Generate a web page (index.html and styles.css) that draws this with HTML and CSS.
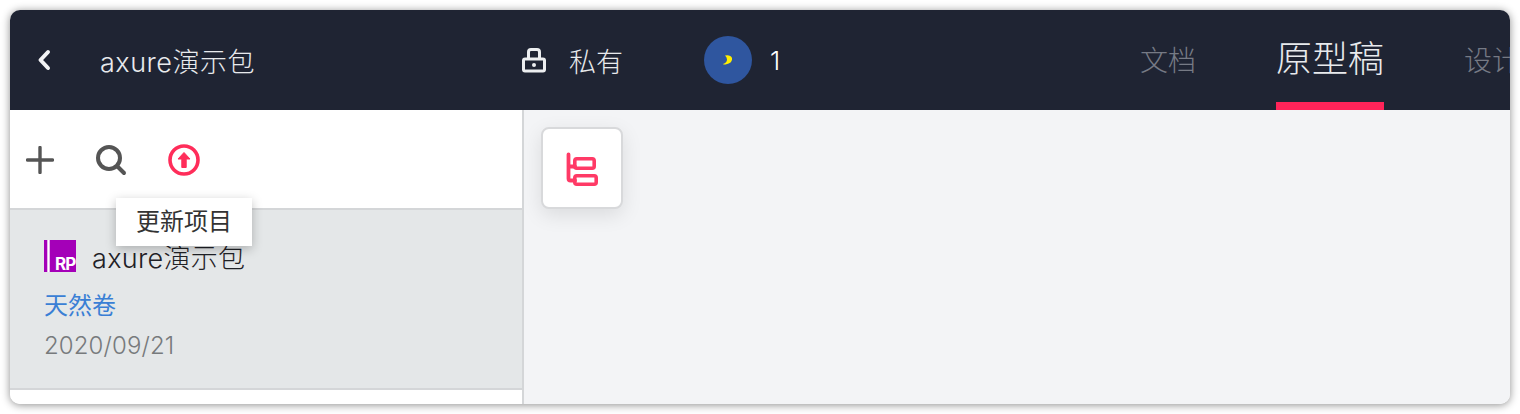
FILE: index.html
```html
<!DOCTYPE html>
<html lang="en">
<head>
<meta charset="UTF-8">
<meta name="viewport" content="width=device-width, initial-scale=1.0">
<title>axure演示包</title>
<link rel="stylesheet" href="styles.css">
</head>
<body>
<div class="window">
    <header class="topbar">
        <a class="back">
            <svg width="16" height="22" viewBox="0 0 16 22"><path d="M12 3 L4.500 11 L12 19" fill="none" stroke="#f2f3f5" stroke-width="4" stroke-linecap="round" stroke-linejoin="round"/></svg>
        </a>
        <div class="project-name">axure演示包</div>
        <div class="privacy">
            <svg width="26" height="26" viewBox="0 0 26 26"><path d="M7.500 11 V5 Q7.500 2.500 10 2.500 H16 Q18.500 2.500 18.500 5 V11" fill="none" stroke="#eceef0" stroke-width="3"/><rect x="2.500" y="12" width="21" height="12" rx="1.500" fill="none" stroke="#eceef0" stroke-width="3"/><circle cx="13" cy="18" r="2" fill="#eceef0"/></svg>
            <span>私有</span>
        </div>
        <div class="members">
            <div class="avatar">
                <svg width="12" height="12" viewBox="0 0 12 12"><path d="M3 1.500 Q8.500 .5 10 4 Q11 9 3.500 10.500 Q1.500 10.800 1 10 Q5 8.500 5 5.500 Q4.800 3 3 1.500 Z" fill="#ffef00"/></svg>
            </div>
            <span>1</span>
        </div>
        <nav class="tabs">
            <a class="tab">文档</a>
            <a class="tab active">原型稿</a>
            <a class="tab">设计稿</a>
        </nav>
    </header>
    <div class="content">
        <aside class="sidebar">
            <div class="toolbar">
                <svg class="tool-plus" width="28" height="28" viewBox="0 0 28 28"><path d="M14 1.500 V26.500 M1.500 14 H26.500" fill="none" stroke="#555" stroke-width="3.400" stroke-linecap="round"/></svg>
                <svg class="tool-search" width="32" height="32" viewBox="0 0 32 32"><circle cx="14" cy="14" r="11" fill="none" stroke="#555" stroke-width="4"/><path d="M22.500 22.500 L29 29" fill="none" stroke="#555" stroke-width="4" stroke-linecap="round"/></svg>
                <svg class="tool-update" width="32" height="32" viewBox="0 0 32 32"><circle cx="16" cy="16" r="14" fill="none" stroke="#ff2d5a" stroke-width="3.600"/><path d="M16 8.500 L22 15 H18.200 V23.500 H13.800 V15 H10 Z" fill="#ff2d5a" stroke="#ff2d5a" stroke-width="1" stroke-linejoin="round"/></svg>
                <div class="tooltip">更新项目</div>
            </div>
            <div class="project-item">
                <div class="item-title">
                    <svg width="32" height="32" viewBox="0 0 32 32"><rect width="32" height="32" fill="#a400b8"/><rect x="3.300" width="2.400" height="32" fill="#fff"/></svg>
                    <span>axure演示包</span>
                    <b class="rp">RP</b>
                </div>
                <div class="item-owner">天然卷</div>
                <div class="item-date">2020/09/21</div>
            </div>
        </aside>
        <main class="canvas">
            <button class="tree-btn">
                <svg width="36" height="36" viewBox="0 0 36 36"><path d="M4.500 4.500 V28.500 Q4.500 30.500 6.500 30.500 H11 M4.500 15 Q4.500 16.500 6.500 16.500 H11" fill="none" stroke="#ff3a66" stroke-width="3.800" stroke-linecap="round"/><rect x="10.800" y="8.800" width="19.400" height="9.400" rx="2" fill="none" stroke="#ff3a66" stroke-width="3.600"/><rect x="10.800" y="25.800" width="21.400" height="8.400" rx="2" fill="none" stroke="#ff3a66" stroke-width="3.600"/></svg>
            </button>
        </main>
    </div>
</div>
</body>
</html>
```

FILE: styles.css
```css
html,
body {
    margin: 0;
    height: 100%;
    background-color: #fff;
    overflow: hidden;
}

body {
    font-family: Inter, "Noto Sans CJK SC", sans-serif;
    padding: 10px;
    box-sizing: border-box;
}

.window {
    width: 1500px;
    height: 394px;
    border-radius: 10px;
    overflow: hidden;
    display: flex;
    flex-direction: column;
    background-color: #fff;
    box-shadow: 0 1px 8px rgba(0, 0, 0, 0.45);
}

.topbar {
    height: 100px;
    flex: none;
    display: flex;
    align-items: center;
    background-color: #1f2433;
    color: #e8eaed;
    font-size: 27px;
    font-weight: 300;
    overflow: hidden;
}

.back {
    display: flex;
    flex: none;
    margin-left: 26px;
    width: 16px;
}

.project-name {
    flex: none;
    margin-left: 48px;
    width: 421px;
    white-space: nowrap;
    letter-spacing: 0.5px;
}

.privacy {
    flex: none;
    display: flex;
    align-items: center;
    gap: 22px;
    width: 183px;
}

.members {
    flex: none;
    display: flex;
    align-items: center;
    gap: 18px;
    width: 82px;
    color: #fff;
    font-size: 26px;
}

.avatar {
    width: 48px;
    height: 48px;
    border-radius: 50%;
    background-color: #2f569f;
    display: flex;
    align-items: center;
    justify-content: center;
}

.tabs {
    margin-left: 354px;
    height: 100%;
    display: flex;
    gap: 80px;
    flex: none;
}

.tab {
    display: flex;
    align-items: center;
    box-sizing: border-box;
    height: 100%;
    font-size: 28px;
    color: #767a85;
    white-space: nowrap;
    border-bottom: 8px solid transparent;
    padding-top: 6px;
}

.tab.active {
    font-size: 36px;
    color: #e8eaed;
    border-bottom-color: #ff2459;
    padding-top: 0;
}

.content {
    flex: 1;
    display: flex;
    min-height: 0;
}

.sidebar {
    width: 512px;
    flex: none;
    border-right: 2px solid #d4d6d8;
    background-color: #fff;
}

.toolbar {
    position: relative;
    height: 96px;
    display: flex;
    align-items: center;
    padding: 2px 0 0 16px;
    border-bottom: 2px solid #d4d6d8;
}

.tool-search {
    margin-left: 41px;
}

.tool-update {
    margin-left: 41px;
}

.tooltip {
    position: absolute;
    left: 106px;
    top: 88px;
    width: 136px;
    height: 48px;
    line-height: 48px;
    text-align: center;
    font-size: 24px;
    color: #333;
    background-color: #fff;
    box-shadow: 0 3px 10px rgba(0, 0, 0, 0.25);
    z-index: 2;
}

.project-item {
    height: 180px;
    box-sizing: border-box;
    padding: 30px 0 0 34px;
    background-color: #e4e7e8;
    border-bottom: 2px solid #d4d6d8;
}

.item-title {
    position: relative;
    display: flex;
    align-items: center;
    gap: 16px;
    height: 32px;
    font-size: 27px;
    font-weight: 300;
    letter-spacing: 0.3px;
    color: #1f2126;
}

.rp {
    position: absolute;
    left: 11px;
    top: 14px;
    font-size: 17px;
    font-weight: 700;
    line-height: 20px;
    letter-spacing: -1px;
    color: #fff;
}

.item-owner {
    margin-top: 17px;
    font-size: 24px;
    line-height: 34px;
    color: #3a7fd5;
}

.item-date {
    margin-top: 6px;
    font-size: 24px;
    font-weight: 300;
    line-height: 34px;
    letter-spacing: 0.1px;
    color: #777a7c;
}

.canvas {
    flex: 1;
    background-color: #f3f4f6;
    padding: 17px 0 0 17px;
}

.tree-btn {
    width: 82px;
    height: 82px;
    padding: 0;
    display: flex;
    align-items: center;
    justify-content: center;
    background-color: #fff;
    border: 2px solid #d8d9db;
    border-radius: 8px;
    box-shadow: 0 6px 20px rgba(0, 0, 0, 0.1);
}
```
